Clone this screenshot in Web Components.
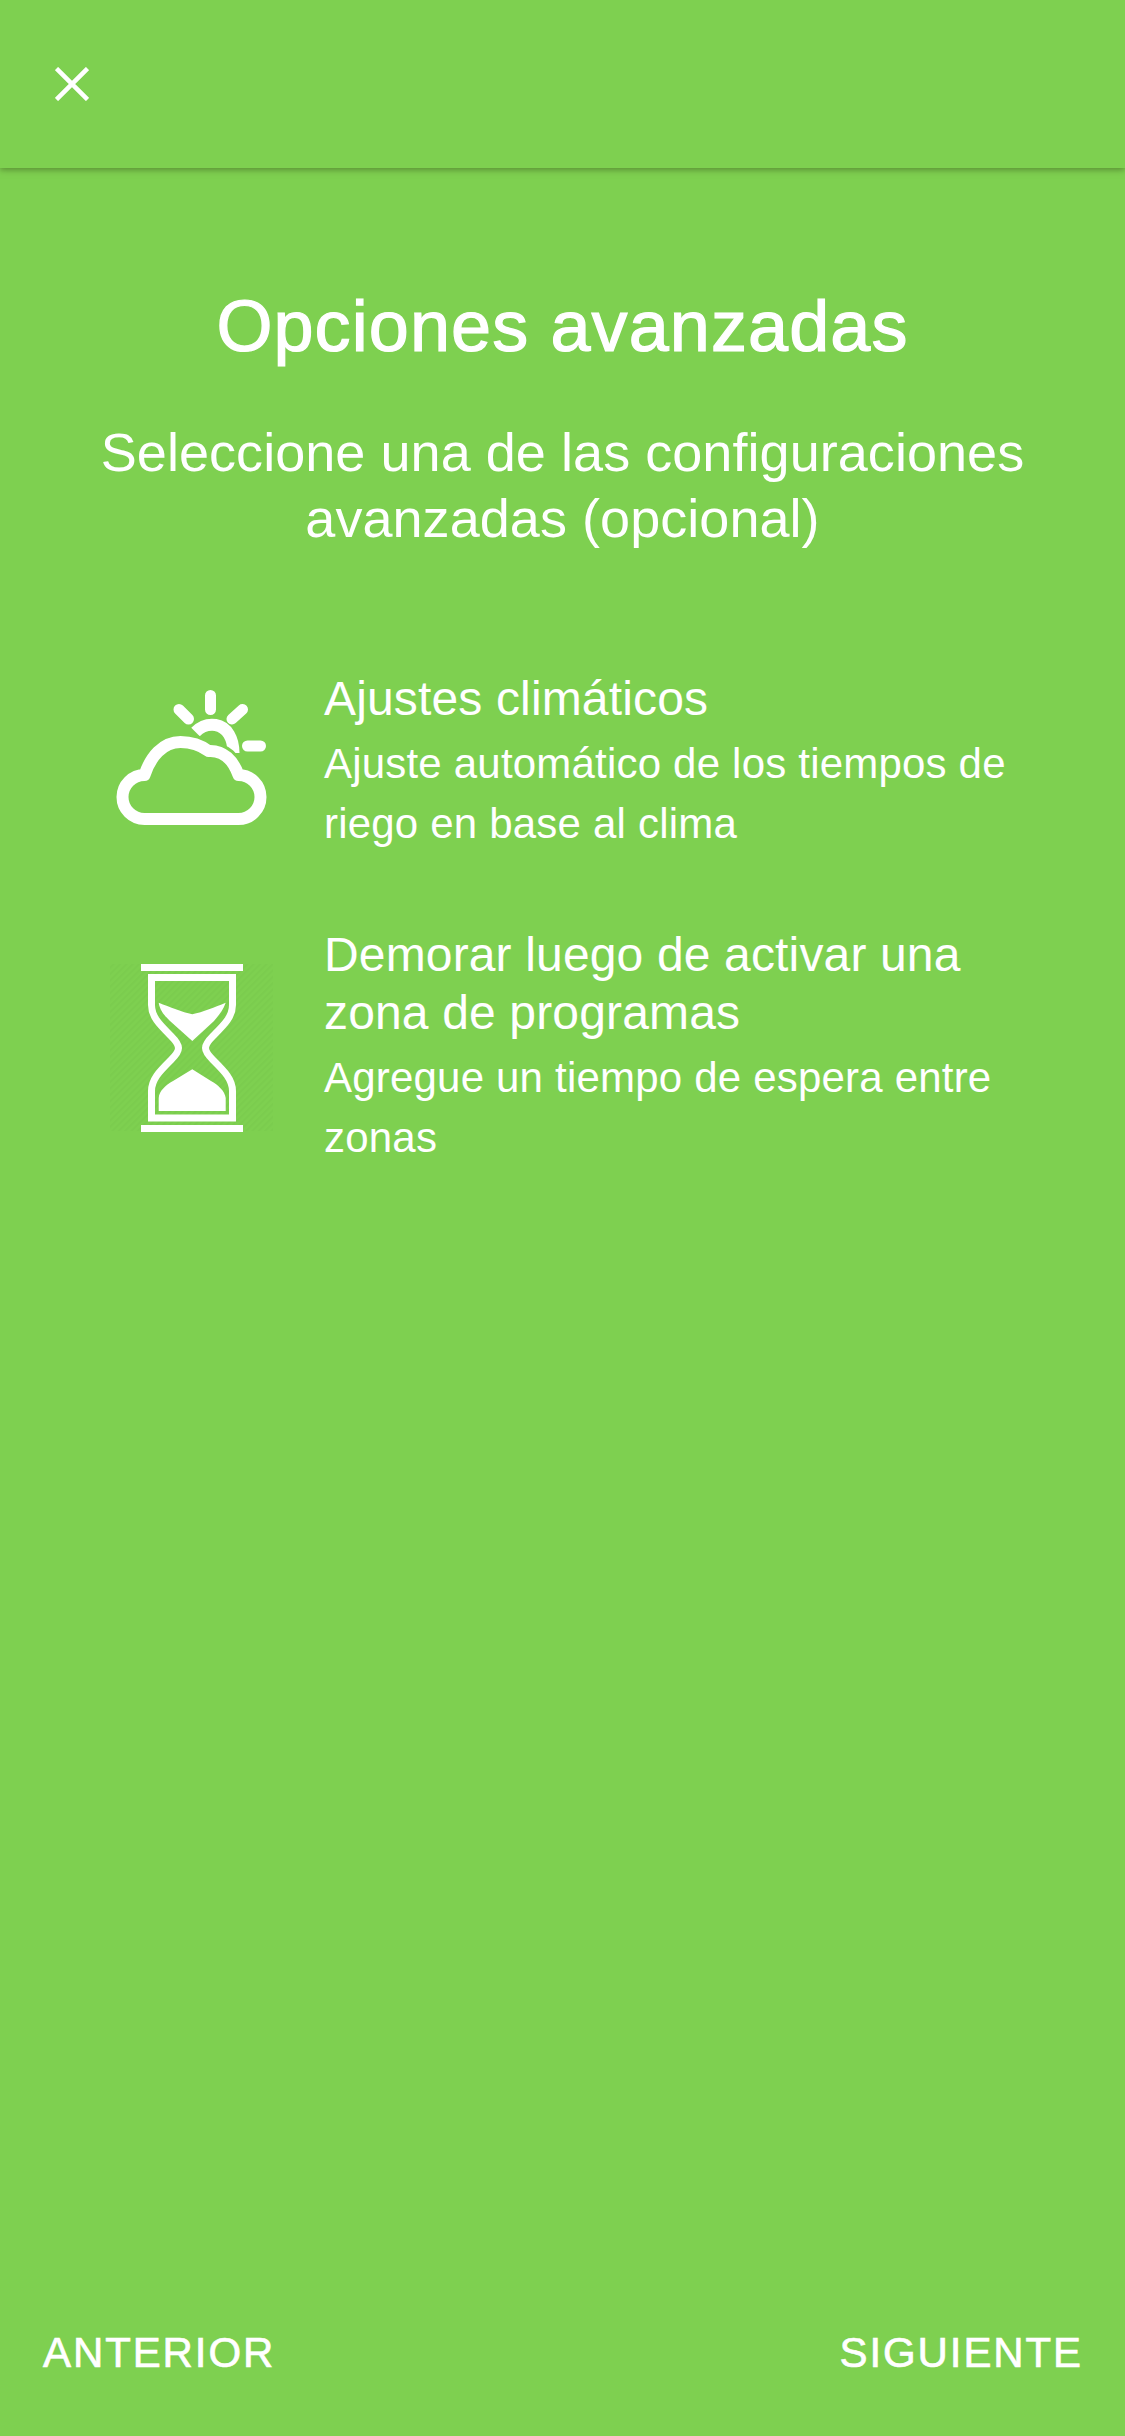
<!doctype html>
<html lang="es">
<head>
<meta charset="utf-8">
<title>Opciones avanzadas</title>
<style>
  html, body { margin: 0; height: 100%; background: #7ed050; }
  body { font-family: "Liberation Sans", Arial, sans-serif; color: #fff; }
</style>
</head>
<body>
<wizard-page>
  <wizard-header slot="header"></wizard-header>
  <wizard-intro heading="Opciones avanzadas">Seleccione una de las configuraciones avanzadas (opcional)</wizard-intro>
  <option-list>
    <option-row heading="Ajustes climáticos">
      <svg slot="icon" width="200" height="180" viewBox="1.5 11 200 180" fill="none" stroke="#fff">
        <path stroke-width="11" stroke-linecap="round" d="M120 34.5V48.5M88.5 48.5L98 58M152 48.5L141.500 58M157 85H170"/>
        <path stroke-width="12" d="M105 71C111 65 118 63 125 64C137 66 143 78 143 92"/>
        <path stroke="#7ed050" stroke-width="18" stroke-linejoin="round" d="M54 114C60 96 72 81 90 81C100 81 110 84 118 90C133 89 143 100 148 114"/>
        <path stroke-width="12" stroke-linejoin="round" fill="#7ed050" d="M54 158A22 22 0 0 1 54 114C60 96 72 81 90 81C100 81 110 84 118 90C133 89 143 100 148 114A22 22 0 0 1 148 158Z"/>
      </svg>
      Ajuste automático de los tiempos de riego en base al clima
    </option-row>
    <option-row heading="Demorar luego de activar una zona de programas">
      <svg slot="icon" width="164" height="200" viewBox="0 6 164 200" fill="none">
        <defs>
          <pattern id="hatch" width="4.5" height="4.5" patternUnits="userSpaceOnUse" patternTransform="rotate(45)">
            <rect width="2" height="4.5" fill="#5aaa3c" fill-opacity=".09"/>
          </pattern>
        </defs>
        <rect x="0" y="23" width="163" height="167" fill="url(#hatch)"/>
        <path fill="#fff" d="M31 23H133V30H31ZM31 184H133V191H31Z"/>
        <path stroke="#fff" stroke-width="7" d="M41.5 36.5H122.5V64C122.5 76 114 84 103 95C93 105 93 109 103 119C114 130 122.5 138 122.5 150V177H41.500V150C41.500 138 50 130 61 119C71 109 71 105 61 95C50 84 41.500 76 41.500 64Z"/>
        <path fill="#fff" d="M48.700 61.700C60 66 72 71 82.300 73.300C93 71 105 66 115.700 61.700C113 70 108 75 104 80L82.300 100L60 80C55 75 50 70 48.700 61.700ZM82.300 128.300L63 140C56 144 49 150 48.700 157V170H115.700V157C115 150 108 144 101 140Z"/>
      </svg>
      Agregue un tiempo de espera entre zonas
    </option-row>
  </option-list>
  <wizard-footer></wizard-footer>
</wizard-page>
<script>
  class WizardPage extends HTMLElement {
    constructor() {
      super();
      this.attachShadow({ mode: "open" });
      this.shadowRoot.innerHTML = `
        <style>
          :host { display: flex; flex-direction: column; height: 2436px; width: 1125px; overflow: hidden; background: #7ed050; }
          ::slotted(wizard-footer) { margin-top: auto; }
        </style>
        <slot name="header"></slot>
        <slot></slot>
      `;
    }
  }
  class WizardHeader extends HTMLElement {
    constructor() {
      super();
      this.attachShadow({ mode: "open" });
      this.shadowRoot.innerHTML = `
        <style>
          :host { display: flex; align-items: center; height: 168px; padding-left: 55px; background: #7ed050; box-shadow: 0 2px 6px rgba(60, 90, 30, .55); position: relative; flex: none; }
          svg { display: block; }
        </style>
        <svg width="34" height="34" viewBox="0 0 34 34" stroke="#fff" stroke-width="4.5"><path d="M1.5 1.5L32.5 32.5M32.5 1.5L1.5 32.5"/></svg>
      `;
    }
  }
  class WizardIntro extends HTMLElement {
    constructor() {
      super();
      this.attachShadow({ mode: "open" });
      this.shadowRoot.innerHTML = `
        <style>
          :host { display: block; padding: 113px 60px 0; text-align: center; color: #fff; flex: none; }
          h1 { margin: 0; font-size: 72px; line-height: 90px; font-weight: 400; letter-spacing: 1.1px; -webkit-text-stroke: 1.2px #fff; }
          p { margin: 48px 0 0; font-size: 54px; line-height: 66px; letter-spacing: .05px; }
        </style>
        <h1></h1>
        <p><slot></slot></p>
      `;
      this.shadowRoot.querySelector("h1").textContent = this.getAttribute("heading");
    }
  }
  class OptionList extends HTMLElement {
    constructor() {
      super();
      this.attachShadow({ mode: "open" });
      this.shadowRoot.innerHTML = `
        <style>
          :host { display: flex; flex-direction: column; gap: 72px; padding: 119px 0 0 92px; flex: none; }
        </style>
        <slot></slot>
      `;
    }
  }
  class OptionRow extends HTMLElement {
    constructor() {
      super();
      this.attachShadow({ mode: "open" });
      this.shadowRoot.innerHTML = `
        <style>
          :host { display: flex; align-items: center; color: #fff; }
          .icon { flex: none; width: 200px; display: flex; justify-content: center; align-items: center; margin: 0 32px 0 0; }
          .text { width: 720px; }
          h2 { margin: 0; font-size: 48px; line-height: 58px; font-weight: 400; letter-spacing: .15px; }
          p { margin: 6px 0 0; font-size: 42px; line-height: 60px; letter-spacing: .2px; }
        </style>
        <div class="icon"><slot name="icon"></slot></div>
        <div class="text"><h2></h2><p><slot></slot></p></div>
      `;
      this.shadowRoot.querySelector("h2").textContent = this.getAttribute("heading");
    }
  }
  class WizardFooter extends HTMLElement {
    constructor() {
      super();
      this.attachShadow({ mode: "open" });
      this.shadowRoot.innerHTML = `
        <style>
          :host { display: flex; justify-content: space-between; align-items: center; padding: 0 42px 53px 43px; color: #fff; font-size: 42px; line-height: 60px; letter-spacing: 1.9px; -webkit-text-stroke: .7px #fff; }
        </style>
        <span>ANTERIOR</span><span>SIGUIENTE</span>
      `;
    }
  }
  customElements.define("wizard-page", WizardPage);
  customElements.define("wizard-header", WizardHeader);
  customElements.define("wizard-intro", WizardIntro);
  customElements.define("option-list", OptionList);
  customElements.define("option-row", OptionRow);
  customElements.define("wizard-footer", WizardFooter);
</script>
</body>
</html>
